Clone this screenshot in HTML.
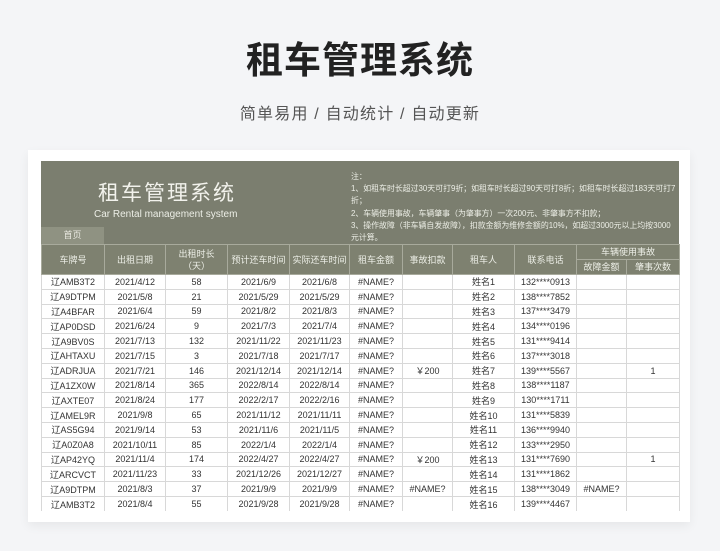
<!DOCTYPE html>
<html><head><meta charset="utf-8"><style>
*{margin:0;padding:0;box-sizing:border-box}
body{width:720px;height:551px;background:#f4f5f7;position:relative;overflow:hidden;font-family:"Liberation Sans","Noto Sans CJK SC",sans-serif}
.t{position:absolute;left:0;width:720px;text-align:center}
#card{position:absolute;left:28px;top:150px;width:662px;height:372px;background:#fff;box-shadow:0 4px 10px rgba(0,0,0,.06)}
#hd{position:absolute;left:41px;top:161px;width:638px;height:83px;background:#7b7e6f}
#tab{position:absolute;left:41px;top:227px;width:63px;height:17px;background:#8f9282;color:#e8e8e0;font-size:9px;text-align:center;line-height:17px}
table{position:absolute;left:41px;top:244px;border-collapse:collapse;table-layout:fixed;width:638px;font-size:9px;color:#333}
td,th{border:1px solid #d8d8d8;text-align:center;height:14.8px;padding:0;white-space:nowrap;overflow:hidden;font-weight:normal}
th{background:#7e8170;color:#eceee6;border-color:#a8aa9c;font-size:9px;line-height:12px}
</style></head><body>
<div class="t" style="top:30px;font-size:37px;font-weight:bold;color:#222;letter-spacing:1px">租车管理系统</div>
<div class="t" style="top:100px;font-size:16px;color:#555;letter-spacing:1.2px">简单易用 / 自动统计 / 自动更新</div>
<div id="card"></div>
<div id="hd">
<div style="position:absolute;left:57px;top:16px;font-size:21px;color:#f2f2ec;letter-spacing:2px">租车管理系统</div>
<div style="position:absolute;left:53px;top:48px;font-size:10px;color:#eceee6">Car Rental management system</div>
<div style="position:absolute;left:310px;top:10px;width:328px;font-size:7.9px;line-height:12.2px;color:#eceee6;white-space:nowrap">注：<br>1、如租车时长超过30天可打9折；如租车时长超过90天可打8折；如租车时长超过183天可打7<br>折；<br>2、车辆使用事故，车辆肇事（为肇事方）一次200元、非肇事方不扣款；<br>3、操作故障（非车辆自发故障），扣款金额为维修金额的10%，如超过3000元以上均按3000<br>元计算。</div>
</div>
<div id="tab">首页</div>
<table>
<colgroup><col style="width:63px"><col style="width:61px"><col style="width:62px"><col style="width:62px"><col style="width:60px"><col style="width:53px"><col style="width:50px"><col style="width:62px"><col style="width:62px"><col style="width:50px"><col style="width:53px"></colgroup>
<tr><th rowspan="2" style="height:30px">车牌号</th><th rowspan="2">出租日期</th><th rowspan="2">出租时长<br>（天）</th><th rowspan="2">预计还车时间</th><th rowspan="2">实际还车时间</th><th rowspan="2">租车金额</th><th rowspan="2">事故扣款</th><th rowspan="2">租车人</th><th rowspan="2">联系电话</th><th colspan="2" style="height:15px">车辆使用事故</th></tr>
<tr><th style="height:15px">故障金额</th><th>肇事次数</th></tr>
<tr><td>辽AMB3T2</td><td>2021/4/12</td><td>58</td><td>2021/6/9</td><td>2021/6/8</td><td>#NAME?</td><td></td><td>姓名1</td><td>132****0913</td><td></td><td></td></tr>
<tr><td>辽A9DTPM</td><td>2021/5/8</td><td>21</td><td>2021/5/29</td><td>2021/5/29</td><td>#NAME?</td><td></td><td>姓名2</td><td>138****7852</td><td></td><td></td></tr>
<tr><td>辽A4BFAR</td><td>2021/6/4</td><td>59</td><td>2021/8/2</td><td>2021/8/3</td><td>#NAME?</td><td></td><td>姓名3</td><td>137****3479</td><td></td><td></td></tr>
<tr><td>辽AP0DSD</td><td>2021/6/24</td><td>9</td><td>2021/7/3</td><td>2021/7/4</td><td>#NAME?</td><td></td><td>姓名4</td><td>134****0196</td><td></td><td></td></tr>
<tr><td>辽A9BV0S</td><td>2021/7/13</td><td>132</td><td>2021/11/22</td><td>2021/11/23</td><td>#NAME?</td><td></td><td>姓名5</td><td>131****9414</td><td></td><td></td></tr>
<tr><td>辽AHTAXU</td><td>2021/7/15</td><td>3</td><td>2021/7/18</td><td>2021/7/17</td><td>#NAME?</td><td></td><td>姓名6</td><td>137****3018</td><td></td><td></td></tr>
<tr><td>辽ADRJUA</td><td>2021/7/21</td><td>146</td><td>2021/12/14</td><td>2021/12/14</td><td>#NAME?</td><td>￥200</td><td>姓名7</td><td>139****5567</td><td></td><td>1</td></tr>
<tr><td>辽A1ZX0W</td><td>2021/8/14</td><td>365</td><td>2022/8/14</td><td>2022/8/14</td><td>#NAME?</td><td></td><td>姓名8</td><td>138****1187</td><td></td><td></td></tr>
<tr><td>辽AXTE07</td><td>2021/8/24</td><td>177</td><td>2022/2/17</td><td>2022/2/16</td><td>#NAME?</td><td></td><td>姓名9</td><td>130****1711</td><td></td><td></td></tr>
<tr><td>辽AMEL9R</td><td>2021/9/8</td><td>65</td><td>2021/11/12</td><td>2021/11/11</td><td>#NAME?</td><td></td><td>姓名10</td><td>131****5839</td><td></td><td></td></tr>
<tr><td>辽AS5G94</td><td>2021/9/14</td><td>53</td><td>2021/11/6</td><td>2021/11/5</td><td>#NAME?</td><td></td><td>姓名11</td><td>136****9940</td><td></td><td></td></tr>
<tr><td>辽A0Z0A8</td><td>2021/10/11</td><td>85</td><td>2022/1/4</td><td>2022/1/4</td><td>#NAME?</td><td></td><td>姓名12</td><td>133****2950</td><td></td><td></td></tr>
<tr><td>辽AP42YQ</td><td>2021/11/4</td><td>174</td><td>2022/4/27</td><td>2022/4/27</td><td>#NAME?</td><td>￥200</td><td>姓名13</td><td>131****7690</td><td></td><td>1</td></tr>
<tr><td>辽ARCVCT</td><td>2021/11/23</td><td>33</td><td>2021/12/26</td><td>2021/12/27</td><td>#NAME?</td><td></td><td>姓名14</td><td>131****1862</td><td></td><td></td></tr>
<tr><td>辽A9DTPM</td><td>2021/8/3</td><td>37</td><td>2021/9/9</td><td>2021/9/9</td><td>#NAME?</td><td>#NAME?</td><td>姓名15</td><td>138****3049</td><td>#NAME?</td><td></td></tr>
<tr><td style="border-bottom:none">辽AMB3T2</td><td style="border-bottom:none">2021/8/4</td><td style="border-bottom:none">55</td><td style="border-bottom:none">2021/9/28</td><td style="border-bottom:none">2021/9/28</td><td style="border-bottom:none">#NAME?</td><td style="border-bottom:none"></td><td style="border-bottom:none">姓名16</td><td style="border-bottom:none">139****4467</td><td style="border-bottom:none"></td><td style="border-bottom:none"></td></tr>
</table>
</body></html>
